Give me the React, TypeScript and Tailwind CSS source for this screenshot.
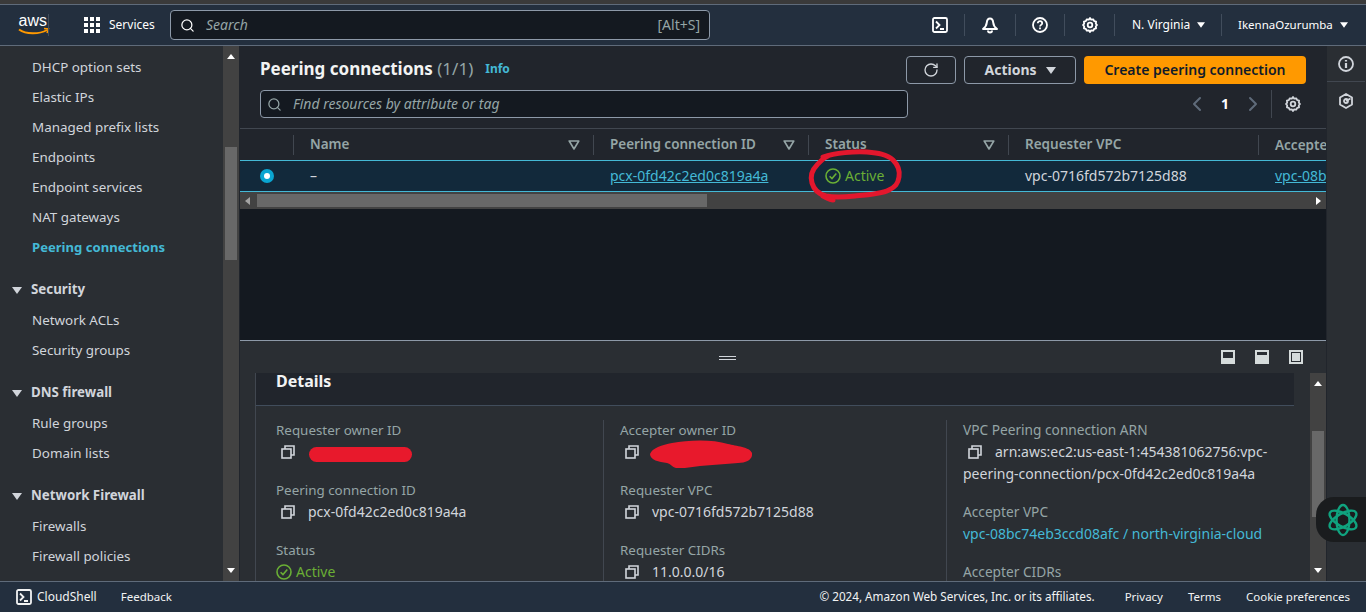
import { ChevronLeft, ChevronRight, RotateCw, Search } from "lucide-react";

const FONT = "font-['Noto_Sans','Open_Sans',sans-serif]";

function Caret({ className = "" }: { className?: string }) {
  return (
    <svg width="10" height="7" viewBox="0 0 10 7" className={className}>
      <path d="M0 0h10L5 7z" fill="currentColor" />
    </svg>
  );
}

function TerminalIcon({ size = 16 }: { size?: number }) {
  return (
    <svg width={size} height={size} viewBox="0 0 16 16" fill="none" stroke="currentColor" strokeWidth="1.8">
      <rect x="1" y="1" width="14" height="14" rx="1.5" />
      <path d="M4 4.500 7.500 8 4 11.500M8 12h4" />
    </svg>
  );
}

function GearIcon() {
  return (
    <svg width="16" height="16" viewBox="0 0 16 16" fill="none" stroke="currentColor" strokeWidth="1.8">
      <path d="M8 1l1.200 1.700 2-.4 1 1.800 1.900.6-.3 2L15 8l-1.200 1.300.3 2-1.900.6-1 1.800-2-.4L8 15l-1.200-1.700-2 .4-1-1.800-1.900-.6.3-2L1 8l1.200-1.300-.3-2 1.900-.6 1-1.800 2 .4z" strokeLinejoin="round" />
      <circle cx="8" cy="8" r="2.300" />
    </svg>
  );
}

function CopyIcon() {
  return (
    <svg width="14" height="14" viewBox="0 0 14 14" fill="none" stroke="currentColor" strokeWidth="1.6" className="shrink-0 text-[#d1d5db]">
      <rect x="1" y="4" width="9" height="9" />
      <path d="M4 4V1h9v9h-3" />
    </svg>
  );
}

function ActiveIcon() {
  return (
    <svg width="16" height="16" viewBox="0 0 16 16" fill="none" stroke="currentColor" strokeWidth="1.600" className="shrink-0">
      <circle cx="8" cy="8" r="7" />
      <path d="M4.600 8.200 7 10.600l4.300-5" />
    </svg>
  );
}

function Filter() {
  return (
    <svg width="12" height="10" viewBox="0 0 12 10" fill="none" stroke="#95a5a6" strokeWidth="1.600" className="shrink-0">
      <path d="M1.200 1h9.600L6 9z" strokeLinejoin="round" />
    </svg>
  );
}

function NavItem({ label, active }: { label: string; active?: boolean }) {
  return (
    <div className={`h-[30px] pl-8 flex items-center whitespace-nowrap ${active ? "pt-[2px] text-[13.1px] text-[#44b9d6] font-bold" : "text-[13.4px] text-[#d1d5db]"}`}>
      {label}
    </div>
  );
}

function NavGroup({ label }: { label: string }) {
  return (
    <div className="h-[30px] mt-[13px] pl-3 flex items-center gap-[9px] text-[13.3px] font-bold text-[#d1d5db]">
      <Caret />
      {label}
    </div>
  );
}

function ScrollArrow({ up }: { up?: boolean }) {
  return (
    <svg width="8" height="5" viewBox="0 0 8 5" className="text-white">
      <path d={up ? "M0 5h8L4 0z" : "M0 0h8L4 5z"} fill="currentColor" />
    </svg>
  );
}

function Field({ label, value, redacted }: { label: string; value?: string; redacted?: boolean }) {
  return (
    <div className="h-[60px] leading-5">
      <div className="text-[13.4px] text-[#95a5a6]">{label}</div>
      <div className="mt-[2px] flex items-center text-sm text-[#d1d5db]">
        <span className="ml-[5px] mr-[13px]"><CopyIcon /></span>
        {redacted ? <span className="h-5" /> : value}
      </div>
    </div>
  );
}

export default function App() {
  return (
    <div className={`${FONT} relative w-[1366px] h-[612px] overflow-hidden flex flex-col bg-[#21252c] text-[#d1d5db]`}>
      <div className="h-[4px] bg-[#3a3a3a] shrink-0" />

      {/* Top bar */}
      <header className="h-[42px] shrink-0 bg-[#232f3e] border-t border-b border-[#5f6b7a] flex items-center text-white">
        <div className="w-[66px] pl-[18px] relative">
          <svg width="32" height="26" viewBox="0 0 32 26">
            <text x="0.500" y="14" fontSize="16" fill="#fff" fontFamily="Liberation Sans">aws</text>
            <path d="M1 17.500c7 5 20 5 28 .5" fill="none" stroke="#f90" strokeWidth="2" />
            <path d="M26 16.500l4.500 .5-1.500 4" fill="none" stroke="#f90" strokeWidth="1.500" />
          </svg>
          <div className="absolute right-[17px] top-[2px] h-[22px] w-px bg-[#414d5c]" />
        </div>
        <div className="w-[104px] flex items-center gap-[9px] pl-[18px] text-xs">
          <svg width="16" height="16" viewBox="0 0 16 16" fill="#fff" className="shrink-0">
            {[0, 6, 12].flatMap((y) => [0, 6, 12].map((x) => <rect key={`${x}-${y}`} x={x} y={y} width="4" height="4" />))}
          </svg>
          Services
        </div>
        <div className="w-[540px] h-[30px] rounded-sm border border-[#8d99a8] bg-[#141920] flex items-center px-[9px] text-sm text-[#95a5a6]">
          <Search size={15} className="text-white mr-[11px]" />
          <span className="italic">Search</span>
          <span className="ml-auto">[Alt+S]</span>
        </div>
        <div className="ml-auto flex items-center h-full pr-[17px] text-xs">
          <div className="w-[48px] flex justify-center"><TerminalIcon /></div>
          <div className="w-px h-[22px] bg-[#414d5c]" />
          <div className="w-[50px] flex justify-center">
            <svg width="18" height="18" viewBox="0 0 18 18" fill="none" stroke="currentColor" strokeWidth="2">
              <path d="M9 2.500C7 2.500 6 4.500 5.800 6.500 5.500 9.500 4 11.500 2 13h14c-2-1.500-3.500-3.500-3.800-6.500C12 4.500 11 2.500 9 2.500z" strokeLinejoin="round" />
              <path d="M7 14.500a2 2 0 0 0 4 0" />
            </svg>
          </div>
          <div className="w-px h-[22px] bg-[#414d5c]" />
          <div className="w-[48px] flex justify-center">
            <svg width="16" height="16" viewBox="0 0 16 16" fill="none" stroke="currentColor" strokeWidth="1.800">
              <circle cx="8" cy="8" r="7" />
              <path d="M5.800 6.200C5.800 5 6.800 4.200 8 4.200s2.200.8 2.200 2c0 1.600-2.200 1.700-2.200 3.300M8 10.600v1.600" />
            </svg>
          </div>
          <div className="w-px h-[22px] bg-[#414d5c]" />
          <div className="w-[49px] flex justify-center"><GearIcon /></div>
          <div className="w-px h-[22px] bg-[#414d5c]" />
          <div className="w-[106px] pl-[17px] flex items-center gap-[7px]">N. Virginia <Caret className="w-[8px] h-[6px]" /></div>
          <div className="w-px h-[22px] bg-[#414d5c]" />
          <div className="w-[127px] pl-[16px] flex items-center gap-[7px] text-[11.5px]">IkennaOzurumba <Caret className="w-[8px] h-[6px]" /></div>
        </div>
      </header>

      <div className="flex-1 min-h-0 flex">
        {/* Side navigation */}
        <aside className="w-[240px] shrink-0 bg-[#2a2e33] flex border-r border-[#21252c]">
          <div className="flex-1 min-w-0 overflow-hidden pt-[6px]">
            <NavItem label="DHCP option sets" />
            <NavItem label="Elastic IPs" />
            <NavItem label="Managed prefix lists" />
            <NavItem label="Endpoints" />
            <NavItem label="Endpoint services" />
            <NavItem label="NAT gateways" />
            <NavItem label="Peering connections" active />
            <NavGroup label="Security" />
            <NavItem label="Network ACLs" />
            <NavItem label="Security groups" />
            <NavGroup label="DNS firewall" />
            <NavItem label="Rule groups" />
            <NavItem label="Domain lists" />
            <NavGroup label="Network Firewall" />
            <NavItem label="Firewalls" />
            <NavItem label="Firewall policies" />
          </div>
          <div className="w-[16px] shrink-0 bg-[#424242] flex flex-col items-center py-[8px]">
            <ScrollArrow up />
            <div className="w-[12px] h-[113px] mt-[88px] bg-[#686868]" />
            <div className="mt-auto"><ScrollArrow /></div>
          </div>
        </aside>

        {/* Center column */}
        <main className="flex-1 min-w-0 flex flex-col">
          <section className="h-[294px] shrink-0 bg-[#21252c] flex flex-col">
            <div className="h-[83px] shrink-0 px-5 pt-[9px] border-b border-[#414750]">
              <div className="flex items-center h-[28px]">
                <h1 className="text-[17px] font-bold text-[#f2f3f3]">
                  Peering connections <span className="font-normal text-[#95a5a6]">(1/1)</span>
                </h1>
                <span className="ml-3 text-xs font-bold text-[#44b9d6]">Info</span>
                <div className="ml-auto flex items-center gap-2 mt-[2px]">
                  <button className="w-[50px] h-[28px] rounded-sm border border-[#8d99a8] flex items-center justify-center text-[#d1d5db]">
                    <RotateCw size={16} />
                  </button>
                  <button className="w-[112px] h-[28px] rounded-sm border border-[#8d99a8] flex items-center justify-center gap-[9px] text-sm font-bold text-[#d1d5db]">
                    Actions <Caret />
                  </button>
                  <button className="w-[222px] h-[28px] rounded-sm bg-[#ff9900] text-sm font-semibold text-[#0f1b2a]">
                    Create peering connection
                  </button>
                </div>
              </div>
              <div className="mt-[7px] flex items-center h-[28px]">
                <div className="w-[648px] h-[28px] rounded-sm border border-[#8d99a8] bg-[#141920] flex items-center px-[6px] text-sm italic text-[#95a5a6]">
                  <Search size={15} className="text-[#95a5a6] mr-[11px]" />
                  Find resources by attribute or tag
                </div>
                <div className="ml-auto flex items-center pr-[5px] text-[#5f6b7a]">
                  <ChevronLeft size={24} />
                  <span className="mx-[12px] text-sm font-bold text-white">1</span>
                  <ChevronRight size={24} />
                  <div className="w-px h-[28px] bg-[#414750] ml-[6px] mr-[13px]" />
                  <span className="text-[#d1d5db]"><GearIcon /></span>
                </div>
              </div>
            </div>

            {/* Table */}
            <div className="h-[31px] shrink-0 flex items-center text-[13.5px] font-semibold text-[#95a5a6] overflow-hidden">
              <div className="w-[54px] h-5 shrink-0 border-r border-[#414750]" />
              <div className="w-[300px] shrink-0 h-5 pl-4 pr-[13px] flex items-center justify-between border-r border-[#414750]">Name <Filter /></div>
              <div className="w-[215px] shrink-0 h-5 pl-4 pr-[13px] flex items-center justify-between border-r border-[#414750]">Peering connection ID <Filter /></div>
              <div className="w-[200px] shrink-0 h-5 pl-4 pr-[13px] flex items-center justify-between border-r border-[#414750]">Status <Filter /></div>
              <div className="w-[250px] shrink-0 h-5 pl-4 flex items-center border-r border-[#414750]">Requester VPC</div>
              <div className="w-[67px] shrink-0 h-5 pl-4 overflow-hidden whitespace-nowrap">Accepter VPC</div>
            </div>
            <div className="h-[32px] shrink-0 flex items-center text-sm bg-[#12293b] border-y border-[#44b9d6] overflow-hidden">
              <div className="w-[54px] shrink-0 flex justify-center">
                <span className="w-[14px] h-[14px] rounded-full bg-[#0aa5d1] flex items-center justify-center">
                  <span className="w-[6px] h-[6px] rounded-full bg-white" />
                </span>
              </div>
              <div className="w-[300px] shrink-0 pl-4 text-[#d1d5db]">–</div>
              <div className="w-[215px] shrink-0 pl-4 text-[#44b9d6] underline">pcx-0fd42c2ed0c819a4a</div>
              <div className="w-[200px] shrink-0 pl-4 text-[#6aaf35] flex items-center gap-1"><ActiveIcon /> Active</div>
              <div className="w-[250px] shrink-0 pl-4 text-[#d1d5db]">vpc-0716fd572b7125d88</div>
              <div className="w-[67px] shrink-0 pl-4 text-[#44b9d6] underline overflow-hidden whitespace-nowrap">vpc-08bc74eb3ccd08afc</div>
            </div>
            <div className="h-[17px] shrink-0 bg-[#424242] flex items-center justify-between px-[5px]">
              <svg width="5" height="8" viewBox="0 0 5 8" className="text-[#a3a3a3]"><path d="M5 0v8L0 4z" fill="currentColor" /></svg>
              <div className="absolute left-[257px] w-[450px] h-[13px] bg-[#686868]" />
              <svg width="5" height="8" viewBox="0 0 5 8" className="text-white"><path d="M0 0v8l5-4z" fill="currentColor" /></svg>
            </div>
            <div className="flex-1 bg-[#141920]" />
          </section>

          {/* Split panel */}
          <section className="flex-1 min-h-0 bg-[#2a2e33] border-t border-[#8d99a8] flex flex-col">
            <div className="h-[32px] shrink-0 relative flex items-center justify-end gap-[20px] pr-[23px]">
              <div className="absolute left-[479px] top-[15px] w-[17px] h-[4px] border-y border-[#d1d5db]" />
              <div className="w-[14px] h-[14px] border-2 border-[#d5dbdb] flex items-end"><div className="w-full h-[4px] bg-[#d5dbdb]" /></div>
              <div className="w-[14px] h-[14px] border-2 border-[#d5dbdb] flex items-end"><div className="w-full h-[7px] bg-[#d5dbdb]" /></div>
              <div className="w-[14px] h-[14px] border-2 border-[#d5dbdb] p-px"><div className="w-full h-full bg-[#d5dbdb]" /></div>
            </div>
            <div className="flex-1 min-h-0 flex pl-[15px]">
              <div className="flex-1 min-w-0 overflow-hidden border-l border-[#414750] bg-[#2a2e33] mr-[16px]">
                <div className="h-[33px] bg-[#21252c] border-b border-[#414d5c] pl-[20px] text-base font-bold leading-[16px] text-[#f2f3f3]">Details</div>
                <div className="grid grid-cols-[348px_343px_1fr] pt-[14px] h-[200px]">
                  <div className="pl-[20px] border-r border-[#414750]">
                    <Field label="Requester owner ID" redacted />
                    <Field label="Peering connection ID" value="pcx-0fd42c2ed0c819a4a" />
                    <div className="leading-5">
                      <div className="text-[13.4px] text-[#95a5a6]">Status</div>
                      <div className="mt-[2px] flex items-center gap-1 text-sm text-[#6aaf35]"><ActiveIcon /> Active</div>
                    </div>
                  </div>
                  <div className="pl-[16px] border-r border-[#414750]">
                    <Field label="Accepter owner ID" redacted />
                    <Field label="Requester VPC" value="vpc-0716fd572b7125d88" />
                    <Field label="Requester CIDRs" value="11.0.0.0/16" />
                  </div>
                  <div className="pl-[16px] text-sm leading-[22px]">
                    <div className="text-[13.7px] text-[#95a5a6] leading-5 mb-px">VPC Peering connection ARN</div>
                    <div className="text-[#d1d5db] mb-[16px]">
                      <span className="inline-block ml-[5px] mr-[13px] align-[-2px]"><CopyIcon /></span>
                      arn:aws:ec2:us-east-1:454381062756:vpc-peering-connection/pcx-0fd42c2ed0c819a4a
                    </div>
                    <div className="text-[13.7px] text-[#95a5a6]">Accepter VPC</div>
                    <div className="text-[#44b9d6] mb-[16px]">vpc-08bc74eb3ccd08afc / north-virginia-cloud</div>
                    <div className="text-[13.7px] text-[#95a5a6]">Accepter CIDRs</div>
                  </div>
                </div>
              </div>
              <div className="w-[16px] shrink-0 bg-[#424242] flex flex-col items-center py-[8px]">
                <ScrollArrow up />
                <div className="w-[12px] h-[86px] mt-[45px] bg-[#686868]" />
                <div className="mt-auto"><ScrollArrow /></div>
              </div>
            </div>
          </section>
        </main>

        {/* Tools rail */}
        <aside className="w-[40px] shrink-0 bg-[#2a2e33] border-l border-[#21252c] flex flex-col pr-px">
          <div className="h-[36px] flex items-center justify-center border-b border-[#414750]">
            <svg width="16" height="16" viewBox="0 0 16 16" fill="none" stroke="#d1d5db" strokeWidth="1.800"><circle cx="8" cy="8" r="7" /><path d="M8 7v5M8 4v1.600" strokeWidth="2.200" /></svg>
          </div>
          <div className="h-[37px] flex items-center justify-center">
            <svg width="16" height="16" viewBox="0 0 16 16" fill="none" stroke="#d1d5db" strokeWidth="1.800"><path d="M8 1l6 3.500v7L8 15l-6-3.500v-7z" strokeLinejoin="round" /><circle cx="8" cy="8" r="2" /><path d="M8 8l4.500-2.500" /></svg>
          </div>
        </aside>
      </div>

      {/* Footer */}
      <footer className="h-[31px] shrink-0 bg-[#232f3e] border-t border-[#5f6b7a] flex items-center pl-4 pr-4 text-[11.5px] text-[#f2f3f3]">
        <TerminalIcon />
        <span className="ml-[5px] text-xs">CloudShell</span>
        <span className="ml-[24px]">Feedback</span>
        <span className="ml-auto text-[11.7px]">© 2024, Amazon Web Services, Inc. or its affiliates.</span>
        <span className="ml-[30px]">Privacy</span>
        <span className="ml-[25px]">Terms</span>
        <span className="ml-[25px]">Cookie preferences</span>
      </footer>

      {/* Annotations drawn over the screenshot */}
      <svg className="absolute left-[800px] top-[148px]" width="110" height="60" viewBox="0 0 110 60" fill="none" stroke="#e3172d" strokeWidth="5" strokeLinecap="round" strokeLinejoin="round">
        <path d="M23 9C35 5 55 3 67 4c10 1 20 2 26 8 5 5 7 11 6 17-1 7-4 10-10 13-8 4-22 5-34 6-9 1-20 2-29 0-8-2-12-6-14-13-2-7 0-13 5-18 3-3 6-7 11-9" />
        <path d="M23 48c4 2 7 4 10 4" />
      </svg>
      <div className="absolute left-[309px] top-[447px] w-[103px] h-[15px] rounded-full bg-[#e8192c]" />
      <svg className="absolute left-[650px] top-[440px]" width="102" height="28" viewBox="0 0 102 28" fill="#e8192c">
        <path d="M0 14C2 8 12 5 22 3 38 0 62-1 78 4c8 2 22 3 24 9 1 6-5 10-14 10-12 1-26 2-38 3-8 1-18 3-24 2-4-1-5-4-9-5-8-1-17-3-17-9z" />
      </svg>

      {/* Floating widget */}
      <div className="absolute left-[1316px] top-[497px] w-[50px] h-[45px] rounded-l-[18px] bg-[#1a1c1e] flex items-center justify-center pl-1">
        <svg width="34" height="34" viewBox="0 0 34 34" fill="none" stroke="#10a37f" strokeWidth="2.400">
          <ellipse cx="17" cy="17" rx="15" ry="6.500" transform="rotate(30 17 17)" />
          <ellipse cx="17" cy="17" rx="15" ry="6.500" transform="rotate(90 17 17)" />
          <ellipse cx="17" cy="17" rx="15" ry="6.500" transform="rotate(150 17 17)" />
        </svg>
      </div>
    </div>
  );
}
